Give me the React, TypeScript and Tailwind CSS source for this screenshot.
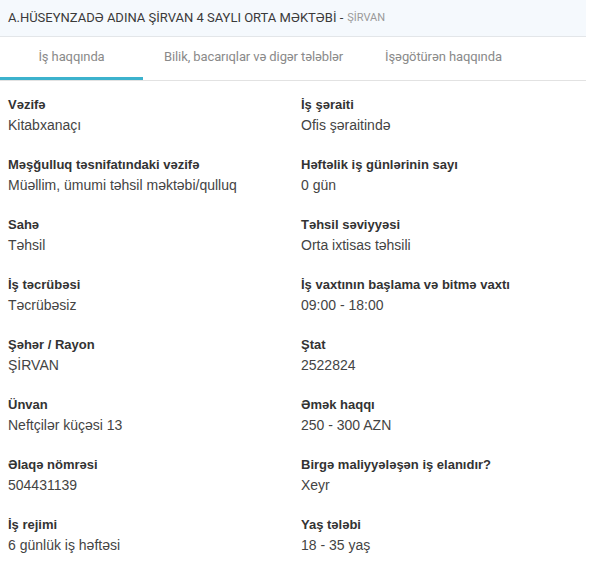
import { useState } from 'react'

const tabs = ['İş haqqında', 'Bilik, bacarıqlar və digər tələblər', 'İşəgötürən haqqında']

const fields: [string, string][] = [
  ['Vəzifə', 'Kitabxanaçı'],
  ['İş şəraiti', 'Ofis şəraitində'],
  ['Məşğulluq təsnifatındaki vəzifə', 'Müəllim, ümumi təhsil məktəbi/qulluq'],
  ['Həftəlik iş günlərinin sayı', '0 gün'],
  ['Sahə', 'Təhsil'],
  ['Təhsil səviyyəsi', 'Orta ixtisas təhsili'],
  ['İş təcrübəsi', 'Təcrübəsiz'],
  ['İş vaxtının başlama və bitmə vaxtı', '09:00 - 18:00'],
  ['Şəhər / Rayon', 'ŞİRVAN'],
  ['Ştat', '2522824'],
  ['Ünvan', 'Neftçilər küçəsi 13'],
  ['Əmək haqqı', '250 - 300 AZN'],
  ['Əlaqə nömrəsi', '504431139'],
  ['Birgə maliyyələşən iş elanıdır?', 'Xeyr'],
  ['İş rejimi', '6 günlük iş həftəsi'],
  ['Yaş tələbi', '18 - 35 yaş'],
]

const App = () => {
  const [active, setActive] = useState(0)

  return (
    <main className="min-h-screen w-[586px] bg-white">
      {/* Title bar */}
      <div className="flex h-[37px] items-center border-b border-[#e3e6e9] bg-[#f5f9fd] px-2 font-[family-name:Roboto,sans-serif]">
        <span className="text-[13px] text-[#3a3a3a]">A.HÜSEYNZADƏ ADINA ŞİRVAN 4 SAYLI ORTA MƏKTƏBİ -</span>
        <span className="ml-1 text-[11px] text-[#9a9a9a]">ŞİRVAN</span>
      </div>

      {/* Tabs */}
      <div className="flex h-[44px] border-b border-[#e2e2e2] font-[family-name:Roboto,sans-serif]">
        {tabs.map((tab, index) => (
          <button
            key={tab}
            onClick={() => setActive(index)}
            className={`flex h-full items-center justify-center border-b-[3px] px-[21px] text-[13px] tracking-[-0.1px] text-[#8a8a8a] ${
              index === 0 ? 'w-[143px]' : ''
            } ${index === active ? 'border-[#3cb2cd]' : 'border-transparent'}`}
          >
            {tab}
          </button>
        ))}
      </div>

      {/* Details */}
      <div className="grid grid-cols-[293px_1fr] px-2 pt-[14px] font-[family-name:'Liberation_Sans',Arial,sans-serif]">
        {fields.map(([label, value]) => (
          <div key={label} className="mb-5">
            <div className="text-[13px] font-bold leading-5 text-[#333]">{label}</div>
            <div className="text-[14px] leading-5 text-[#444]">{value}</div>
          </div>
        ))}
      </div>
    </main>
  )
}

export default App
